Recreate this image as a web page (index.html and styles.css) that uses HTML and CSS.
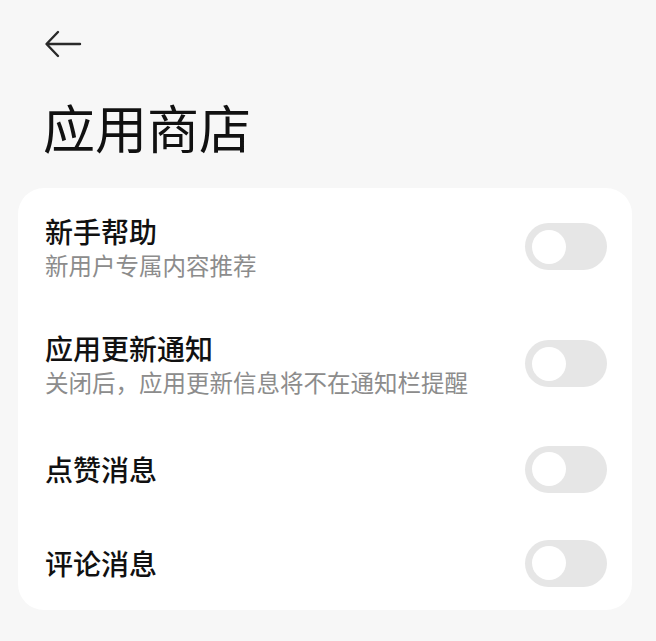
FILE: index.html
```html
<!DOCTYPE html>
<html lang="zh">
<head>
<meta charset="utf-8">
<link rel="stylesheet" href="styles.css">
</head>
<body>
<div class="page">
  <div class="topbar">
    <svg class="back" width="38" height="28" viewBox="0 0 38 28">
      <path d="M36 14H3M14 2L2.5 14L14 26" fill="none" stroke="#2a2a2a" stroke-width="2.4" stroke-linecap="round" stroke-linejoin="round"/>
    </svg>
  </div>
  <h1 class="title">应用商店</h1>
  <div class="card">
    <div class="row two">
      <div class="text">
        <div class="label">新手帮助</div>
        <div class="sub">新用户专属内容推荐</div>
      </div>
      <div class="toggle"><span class="knob"></span></div>
    </div>
    <div class="row two">
      <div class="text">
        <div class="label">应用更新通知</div>
        <div class="sub">关闭后，应用更新信息将不在通知栏提醒</div>
      </div>
      <div class="toggle"><span class="knob"></span></div>
    </div>
    <div class="row one">
      <div class="text">
        <div class="label">点赞消息</div>
      </div>
      <div class="toggle"><span class="knob"></span></div>
    </div>
    <div class="row one">
      <div class="text">
        <div class="label">评论消息</div>
      </div>
      <div class="toggle"><span class="knob"></span></div>
    </div>
  </div>
</div>
</body>
</html>
```

FILE: styles.css
```css
html, body {
  margin: 0;
  padding: 0;
  background: #f7f7f7;
  font-family: "Noto Sans CJK SC", "Noto Sans", sans-serif;
}
.page {
  width: 656px;
  height: 641px;
  overflow: hidden;
}
.topbar {
  height: 88px;
  padding-left: 44px;
  padding-top: 30px;
  box-sizing: border-box;
}
.back {
  display: block;
}
.title {
  margin: 0;
  padding-left: 43px;
  font-size: 52px;
  font-weight: 400;
  line-height: 78px;
  color: #111;
  height: 100px;
}
.card {
  margin-left: 18px;
  width: 614px;
  background: #fff;
  border-radius: 26px;
  padding: 0 25px 0 27px;
  box-sizing: border-box;
}
.row {
  display: flex;
  align-items: center;
  justify-content: space-between;
}
.row.two { height: 117px; }
.row.one { height: 94px; }
.label {
  font-size: 28px;
  line-height: 38px;
  color: #111;
  font-weight: 500;
}
.sub {
  font-size: 23.5px;
  line-height: 32px;
  color: #8c8c8c;
}
.row.two .label {
  line-height: 36px;
}
.toggle {
  width: 82px;
  height: 47px;
  border-radius: 24px;
  background: #e6e6e6;
  display: flex;
  align-items: center;
  padding-left: 7px;
  box-sizing: border-box;
  flex-shrink: 0;
}
.knob {
  width: 34px;
  height: 34px;
  border-radius: 50%;
  background: #fff;
}
```
